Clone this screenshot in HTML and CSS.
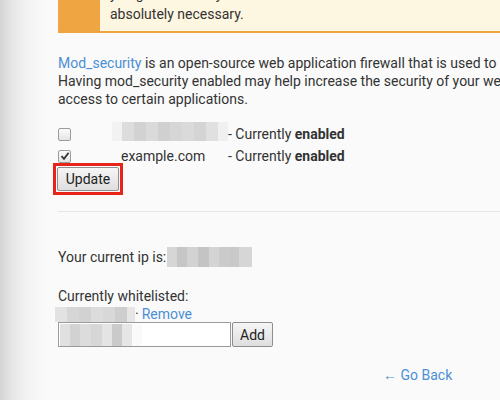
FILE: index.html
```html
<!DOCTYPE html>
<html>
<head>
<meta charset="utf-8">
<link rel="stylesheet" href="styles.css">
</head>
<body>
<div class="page">
  <div class="warning">
    <div class="warning-icon"></div>
    <div class="warning-text">
      <div>you go ahead only if this is</div>
      <div>absolutely necessary.</div>
    </div>
  </div>

  <p class="intro"><a href="#" class="link">Mod_security</a> is an open-source web application firewall that is used to protect<br>Having mod_security enabled may help increase the security of your website, but it may<br>access to certain applications.</p>

  <div class="domains">
    <div class="domain-row">
      <span class="cell-check"><span class="check"></span></span>
      <span class="cell-name"><span class="blur blur-domain"></span></span>
      <span class="cell-status">- Currently <b>enabled</b></span>
    </div>
    <div class="domain-row">
      <span class="cell-check"><span class="check"><svg width="10" height="10" viewBox="0 0 10 10"><path d="M1.5 5.2 L4 7.8 L8.6 1.8" fill="none" stroke="#333" stroke-width="1.8"/></svg></span></span>
      <span class="cell-name name-text">example.com</span>
      <span class="cell-status">- Currently <b>enabled</b></span>
    </div>
  </div>
  <span class="highlight"><button class="btn btn-update">Update</button></span>

  <hr class="divider">

  <div class="ip-line">Your current ip is:<span class="blur blur-ip"></span></div>

  <div class="whitelist">
    <div>Currently whitelisted:</div>
    <div class="wl-item"><span class="blur blur-wl"></span>· <a href="#" class="link">Remove</a></div>
    <div class="add-row">
      <span class="input"><span class="blur blur-input"></span></span><button class="btn btn-add">Add</button>
    </div>
  </div>

  <div class="back"><a href="#" class="link">← Go Back</a></div>
</div>
</body>
</html>
```
FILE: styles.css
```css
html, body {
  margin: 0;
  padding: 0;
}
body {
  width: 500px;
  height: 400px;
  overflow: hidden;
  background: linear-gradient(to right, #d4d4d4 0px, #e6e6e6 12px, #f2f2f2 26px, #f8f8f8 40px, #fafafa 52px);
  font-family: Roboto, "Liberation Sans", sans-serif;
  font-size: 14px;
  line-height: 18px;
  color: #333;
}
.page {
  padding-left: 58px;
  white-space: nowrap;
}
.warning {
  display: flex;
  margin-top: -21px;
  background: #fdf6e0;
  border-bottom: 2px solid #f0a43f;
}
.warning-icon {
  width: 42px;
  flex: none;
  background: #efa541;
}
.warning-text {
  padding: 5px 10px 7px;
  line-height: 20px;
}
.intro {
  margin: 21px 0 0;
}
.link {
  color: #4a8fd4;
  text-decoration: none;
}
.domains {
  margin-top: 15px;
}
.domain-row {
  display: flex;
  align-items: center;
  height: 22px;
}
.cell-check {
  width: 54px;
  display: flex;
  align-items: center;
}
.check {
  width: 11px;
  height: 11px;
  border: 1px solid #9c9c9c;
  border-radius: 2px;
  background: linear-gradient(#fbfbfb, #e4e4e4);
  display: flex;
  align-items: center;
  justify-content: center;
}
.cell-name {
  width: 116px;
  display: flex;
}
.name-text {
  padding-left: 9px;
  box-sizing: border-box;
}
.cell-status b {
  font-weight: 700;
}
.btn {
  font-family: inherit;
  font-size: 14px;
  color: #222;
  background: linear-gradient(#f6f6f6, #dedede);
  border: 1px solid #8f8f8f;
  border-radius: 2px;
  padding: 0;
  height: 24px;
}
.highlight {
  display: inline-block;
  margin-left: -5px;
  margin-top: -4px;
  padding: 1px;
  border: 3px solid #e8231a;
  vertical-align: top;
}
.btn-update {
  width: 62px;
  display: block;
}
.divider {
  border: 0;
  border-top: 1px solid #e6e6e6;
  margin: 16px 0 0;
}
.blur {
  display: inline-block;
  vertical-align: middle;
}
.blur-domain {
  width: 117px;
  height: 19px;
  margin-top: -6px;
  background: linear-gradient(to right, #f2f2f2 0 10px, #dcdcdc 10px 22px, #d2d2d2 22px 34px, #dadada 34px 46px, #d0d0d0 46px 58px, #d6d6d6 58px 70px, #dadada 70px 82px, #d4d4d4 82px 94px, #e0e0e0 94px 106px, #f0f0f0 106px 117px);
}
.ip-line {
  margin-top: 35px;
  display: flex;
  align-items: center;
}
.blur-ip {
  width: 85px;
  height: 20px;
  margin-left: 1px;
  background: linear-gradient(to right, #d6d6d6 0 10px, #c6c6c6 10px 20px, #d2d2d2 20px 31px, #c4c4c4 31px 42px, #d4d4d4 42px 52px, #cbcbcb 52px 62px, #c9c9c9 62px 72px, #d6d6d6 72px 85px);
}
.whitelist {
  margin-top: 20px;
}
.wl-item {
  display: flex;
  align-items: center;
  margin-left: -3px;
}
.wl-item .link {
  margin-left: 3px;
}
.blur-wl {
  width: 80px;
  height: 15px;
  background: linear-gradient(to right, #e2e2e2 0 12px, #d6d6d6 12px 24px, #d2d2d2 24px 36px, #dcdcdc 36px 48px, #d8d8d8 48px 60px, #cecece 60px 72px, #e6e6e6 72px 80px);
}
.add-row {
  display: flex;
  margin-top: -1px;
}
.input {
  display: flex;
  align-items: center;
  width: 170px;
  height: 23px;
  background: #fff;
  border: 1px solid #9a9a9a;
  padding-left: 1px;
}
.blur-input {
  width: 82px;
  height: 22px;
  background: linear-gradient(to right, #e0e0e0 0 10px, #d2d2d2 10px 20px, #dcdcdc 20px 31px, #d6d6d6 31px 42px, #e4e4e4 42px 52px, #cacaca 52px 62px, #e6e6e6 62px 72px, #fafafa 72px 82px);
}
.btn-add {
  width: 41px;
  height: 25px;
  margin-left: 1px;
}
.back {
  margin-top: 19px;
  padding-left: 325px;
}
```
